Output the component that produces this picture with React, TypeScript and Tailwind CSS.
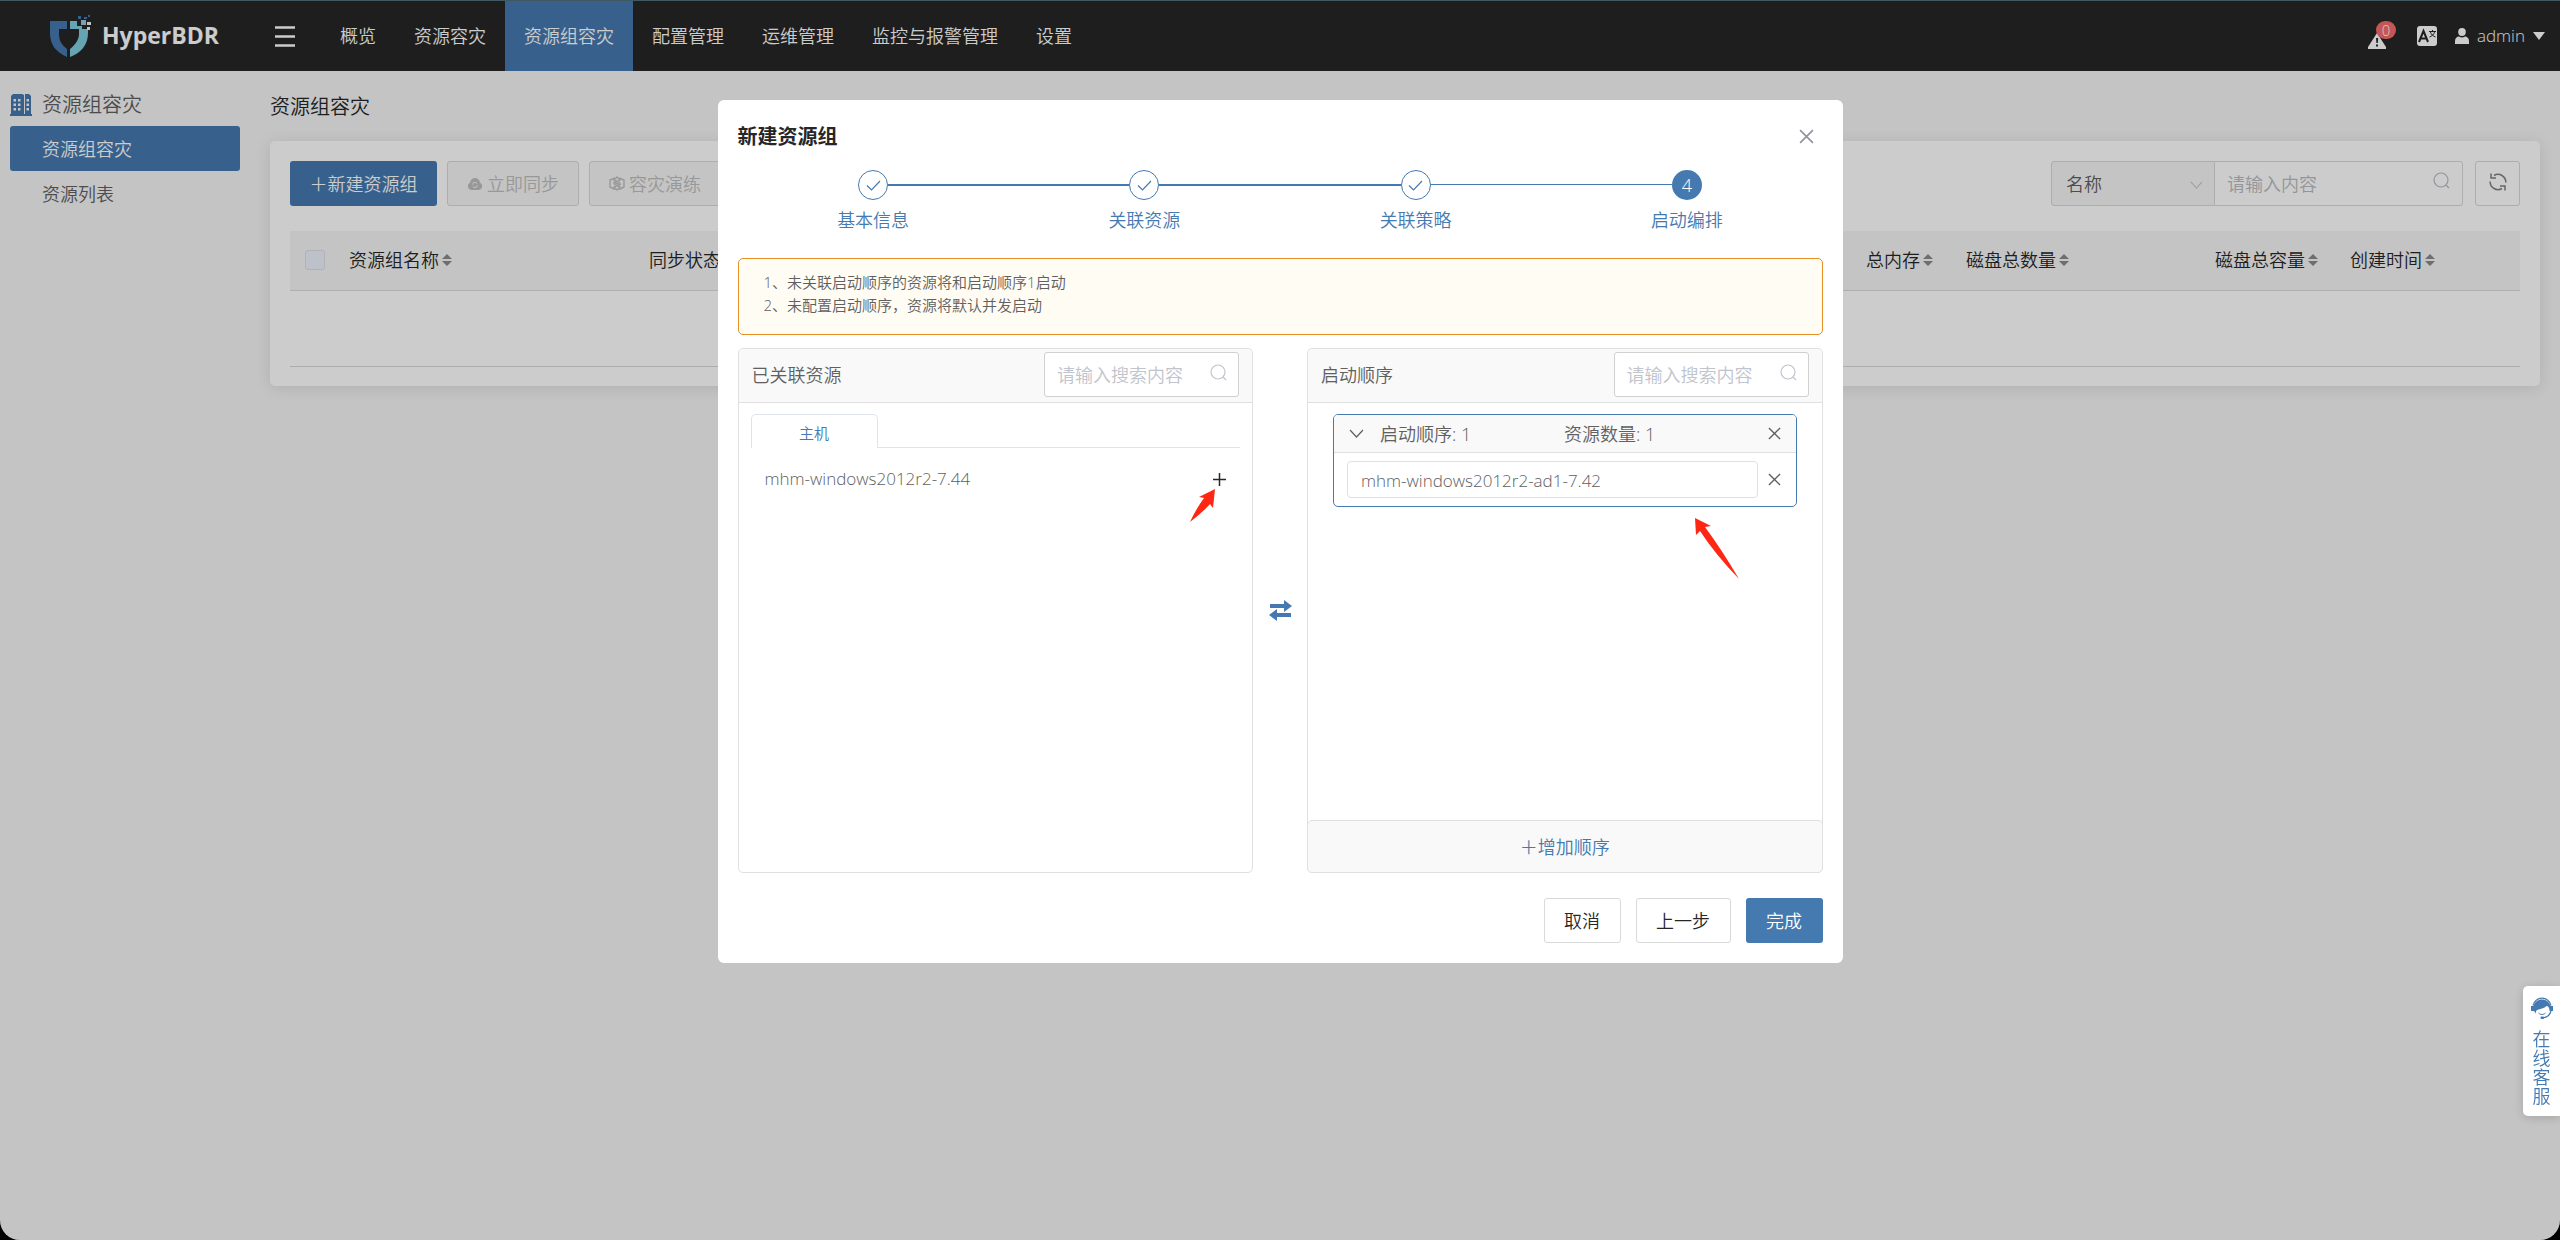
import type { ReactNode } from "react";

const NAV_ITEMS = ["概览", "资源容灾", "资源组容灾", "配置管理", "运维管理", "监控与报警管理", "设置"];
const ACTIVE_NAV = "资源组容灾";

const COLUMNS = [
	{ label: "资源组名称", width: "w-[300px]" },
	{ label: "同步状态", width: "" },
	{ label: "总内存", width: "w-[100px]" },
	{ label: "磁盘总数量", width: "w-[249px]" },
	{ label: "磁盘总容量", width: "w-[135px]" },
	{ label: "创建时间", width: "w-[182px]" },
];

const STEPS = ["基本信息", "关联资源", "关联策略", "启动编排"];
const CURRENT_STEP = 3;

export default function App() {
	return (
		<div className="min-h-screen bg-black font-['Open_Sans','Noto_Sans_CJK_SC',sans-serif] text-[18px] leading-6 font-[350] text-[#606060]">
			<div className="min-h-screen overflow-hidden rounded-b-[20px] bg-[#f5f5f5]">
				<Header />
				<div className="flex">
					<Sidebar />
					<ResourceGroups />
				</div>
			</div>
			<div className="fixed inset-0 flex items-start justify-center rounded-b-[20px] bg-black/20 pt-[100px]">
				<CreateDialog />
			</div>
			<OnlineService />
		</div>
	);
}

function Header() {
	return (
		<header className="flex h-[71px] items-center border-t border-[#51707a] bg-[#262626] text-white">
			<a href="#home" className="flex w-[275px] items-center pl-[49px]">
				<Logo />
				<span className="pl-2.5 pb-0.5 text-[23px] leading-8 font-bold">HyperBDR</span>
			</a>
			<button type="button" aria-label="菜单" className="mr-[26px]">
				<MenuIcon />
			</button>
			<nav className="flex self-stretch">
				{NAV_ITEMS.map((item) => (
					<a
						key={item}
						href="#nav"
						className={
							item === ACTIVE_NAV
								? "flex items-center bg-[#457ab0] px-[19px]"
								: "flex items-center px-[19px]"
						}
					>
						{item}
					</a>
				))}
			</nav>
			<div className="ml-auto flex items-center pr-[15px]">
				<button type="button" aria-label="报警" className="relative mr-[31px] pt-2.5">
					<WarningIcon />
					<span className="absolute -top-0.5 left-2 flex h-[18px] w-5 items-center justify-center rounded-full bg-[#f56c6c] text-[15px] leading-4">
						0
					</span>
				</button>
				<button type="button" aria-label="语言" className="mr-[18px]">
					<LanguageIcon />
				</button>
				<button type="button" className="flex items-center gap-2">
					<UserIcon />
					<span className="text-[17px]">admin</span>
					<svg width="12" height="8" viewBox="0 0 12 8" fill="currentColor">
						<path d="M0 0h12L6 8z" />
					</svg>
				</button>
			</div>
		</header>
	);
}

function Sidebar() {
	return (
		<aside className="flex w-[250px] shrink-0 flex-col px-2.5 pt-[13px]">
			<h2 className="flex h-[42px] items-center gap-2.5 text-[20px]">
				<BuildingIcon />
				资源组容灾
			</h2>
			<a href="#groups" className="flex h-[45px] items-center rounded-[3px] bg-[#457ab0] pl-8 text-white">
				资源组容灾
			</a>
			<a href="#resources" className="flex h-[45px] items-center pl-8">
				资源列表
			</a>
		</aside>
	);
}

function ResourceGroups() {
	return (
		<main className="min-w-0 flex-1 px-5">
			<h1 className="flex h-[70px] items-center pt-0.5 text-[20px] text-[#262626]">资源组容灾</h1>
			<section className="rounded-[5px] bg-white px-5 pt-5 pb-[19px] shadow-[0_2px_15px_rgba(0,0,0,0.1)]">
				<div className="flex h-[45px] items-stretch gap-2.5">
					<button type="button" className="w-[147px] rounded-[3px] bg-[#457ab0] text-white">
						＋新建资源组
					</button>
					<ToolButton icon={<CloudSyncIcon />}>立即同步</ToolButton>
					<ToolButton icon={<DrillIcon />}>容灾演练</ToolButton>
					<div className="mr-0.5 ml-auto flex">
						<div className="relative w-[164px]">
							<select
								aria-label="搜索字段"
								className="size-full appearance-none rounded-l-[3px] border border-[#d9d9d9] bg-[#f5f5f5] pl-3.5"
							>
								<option>名称</option>
							</select>
							<ChevronIcon className="absolute top-5 right-3 h-2 w-[13px] text-[#c0c4cc]" />
						</div>
						<div className="relative w-[248px]">
							<input
								aria-label="请输入内容"
								placeholder="请输入内容"
								className="size-full rounded-r-[3px] border border-l-0 border-[#d9d9d9] pl-3 placeholder:text-[#b8bbc2]"
							/>
							<SearchIcon className="absolute top-[11px] right-[13px] text-[#b8bbc2]" />
						</div>
					</div>
					<button
						type="button"
						aria-label="刷新"
						className="flex w-[45px] items-center justify-center rounded-[3px] border border-[#d9d9d9] pb-1"
					>
						<RefreshIcon />
					</button>
				</div>
				<table className="mt-[25px] w-full table-fixed">
					<thead>
						<tr className="h-[59px] border-b border-[#d9d9d9] bg-[#f5f5f5] text-left text-[#262626]">
							<th className="w-[47px] pl-[15px]">
								<input
									type="checkbox"
									aria-label="全选"
									disabled
									className="block size-5 appearance-none rounded-[3px] border border-[#dcdfe6] bg-[#edf2fc]"
								/>
							</th>
							{COLUMNS.map(({ label, width }) => (
								<th key={label} className={`pl-3 font-[350] ${width}`}>
									<span className="flex items-center gap-[3px] whitespace-nowrap">
										{label}
										<SortIcon />
									</span>
								</th>
							))}
						</tr>
					</thead>
					<tbody>
						<tr className="h-[76px] border-b border-[#d9d9d9]">
							<td colSpan={7} />
						</tr>
					</tbody>
				</table>
			</section>
		</main>
	);
}

function ToolButton({ icon, children }: { icon: ReactNode; children: ReactNode }) {
	return (
		<button
			type="button"
			disabled
			className="flex w-[132px] items-center justify-center gap-1 rounded-[3px] border border-[#d9d9d9] bg-[#f5f5f5] text-[#bfbfbf]"
		>
			{icon}
			{children}
		</button>
	);
}

function CreateDialog() {
	return (
		<div role="dialog" aria-label="新建资源组" className="w-[1125px] rounded-md bg-white px-5 pb-5">
			<div className="flex h-[70px] items-center justify-between pt-[3px]">
				<h2 className="text-[20px] font-bold text-[#262626]">新建资源组</h2>
				<button type="button" aria-label="关闭" className="mr-[9px] text-[#909399]">
					<CrossIcon className="size-[15px]" />
				</button>
			</div>
			<Steps />
			<div className="mt-[26px] h-[77px] rounded-[5px] border border-[#e88f25] bg-[#fffcf4] px-[25px] pt-3 text-[15px] leading-[23px]">
				<p>1、未关联启动顺序的资源将和启动顺序1启动</p>
				<p>2、未配置启动顺序，资源将默认并发启动</p>
			</div>
			<div className="mt-[13px] flex h-[525px] items-stretch">
				<Panel title="已关联资源">
					<div className="relative px-3 pt-[11px]">
						<div role="tablist" className="flex h-[34px] border-b border-[#dfe3ec]">
							<button
								type="button"
								role="tab"
								aria-selected
								className="-mb-px w-[127px] rounded-t-[5px] border border-b-0 border-[#dfe3ec] bg-white pt-0.5 text-[15px] text-[#457ab0]"
							>
								主机
							</button>
						</div>
						<div className="flex h-[62px] items-center justify-between px-3.5 text-[17px]">
							<span>mhm-windows2012r2-7.44</span>
							<button type="button" aria-label="添加" className="text-[#262626]">
								<svg width="13" height="13" viewBox="0 0 13 13" fill="none" stroke="currentColor" strokeWidth="1.5">
									<path d="M6.5 0v13M0 6.5h13" />
								</svg>
							</button>
						</div>
						<svg className="absolute top-[86px] right-9" width="26" height="33" viewBox="0 0 26 33" fill="#fe2713">
							<path d="M25 0 23 19 20 15Q12 24 0 33Q6 20 14 9L9 8Z" />
						</svg>
					</div>
				</Panel>
				<div className="flex w-[54px] items-center justify-center text-[#457ab0]">
					<SwapIcon />
				</div>
				<Panel title="启动顺序">
					<div className="relative px-[25px] pt-[11px]">
						<StartGroup />
						<svg className="absolute top-[115px] left-[387px]" width="45" height="62" viewBox="0 0 45 62" fill="#fe2713">
							<path d="M0 0 16 8 10 9Q27 32 44 61Q20 36 5 13L1 17Z" />
						</svg>
					</div>
					<button
						type="button"
						className="-mx-px mt-auto -mb-px h-[53px] rounded-[5px] border border-[#e0e0e0] bg-[#f9f9f9] text-[#457ab0]"
					>
						＋增加顺序
					</button>
				</Panel>
			</div>
			<div className="mt-[25px] flex justify-end gap-[15px] text-[#262626]">
				<button type="button" className="h-[45px] w-[77px] rounded-[3px] border border-[#d9d9d9]">
					取消
				</button>
				<button type="button" className="h-[45px] w-[95px] rounded-[3px] border border-[#d9d9d9]">
					上一步
				</button>
				<button type="button" className="h-[45px] w-[77px] rounded-[3px] bg-[#457ab0] text-white">
					完成
				</button>
			</div>
		</div>
	);
}

function Steps() {
	return (
		<ol className="flex text-[#457ab0]">
			{STEPS.map((step, i) => (
				<li key={step} className="flex flex-1 flex-col items-center">
					<div className="flex w-full items-center">
						<StepLine index={i - 1} />
						{i === CURRENT_STEP ? (
							<span className="flex size-[30px] items-center justify-center rounded-full bg-[#457ab0] text-white">
								{i + 1}
							</span>
						) : (
							<span className="flex size-[30px] items-center justify-center rounded-full border border-[#457ab0]">
								<svg width="15" height="11" viewBox="0 0 15 11" fill="none" stroke="currentColor" strokeWidth="1.2">
									<path d="M1 5.5 5.5 10 14 1" />
								</svg>
							</span>
						)}
						<StepLine index={i} />
					</div>
					<span className="pt-2">{step}</span>
				</li>
			))}
		</ol>
	);
}

// Half of the line that joins step `index` to the next one
function StepLine({ index }: { index: number }) {
	if (index < 0 || index >= CURRENT_STEP) return <span className="flex-1" />;
	return (
		<span
			className={
				index < CURRENT_STEP - 1
					? "h-0.5 flex-1 border-t-2 border-[#457ab0]"
					: "h-0.5 flex-1 border-t border-[#457ab0]"
			}
		/>
	);
}

function Panel({ title, children }: { title: string; children: ReactNode }) {
	return (
		<section className="flex flex-1 flex-col rounded-[5px] border border-[#e0e0e0]">
			<div className="flex h-[54px] items-start justify-between rounded-t-[5px] border-b border-[#e0e0e0] bg-[#f9f9f9] px-[13px] pt-[3px]">
				<h3 className="pt-[11px]">{title}</h3>
				<div className="relative h-[45px] w-[195px]">
					<input
						aria-label={`搜索${title}`}
						placeholder="请输入搜索内容"
						className="size-full rounded-[3px] border border-[#d0d0d0] bg-white pl-3 placeholder:text-[#c0c4cc]"
					/>
					<SearchIcon className="absolute top-3 right-3 text-[#c0c4cc]" />
				</div>
			</div>
			{children}
		</section>
	);
}

function StartGroup() {
	return (
		<div className="h-[93px] overflow-hidden rounded-[5px] border border-[#457ab0]">
			<div className="flex h-[38px] items-center border-b border-[#e0e0e0] bg-[#f9f9f9] px-[15px]">
				<ChevronIcon className="mr-4 h-[9px] w-[15px]" />
				<span className="w-[184px]">启动顺序: 1</span>
				<span>资源数量: 1</span>
				<button type="button" aria-label="删除顺序" className="ml-auto">
					<CrossIcon className="size-[13px]" />
				</button>
			</div>
			<div className="flex items-center pt-2 pr-[15px] pl-[13px]">
				<input
					aria-label="资源"
					readOnly
					value="mhm-windows2012r2-ad1-7.42"
					className="h-[37px] w-[411px] rounded-[4px] border border-[#e0e0e0] pt-0.5 pl-[13px] text-[17px]"
				/>
				<button type="button" aria-label="移除资源" className="ml-auto">
					<CrossIcon className="size-[13px]" />
				</button>
			</div>
		</div>
	);
}

function OnlineService() {
	return (
		<a
			href="#service"
			className="fixed right-0 bottom-[124px] flex w-[37px] flex-col items-center rounded-l-[5px] bg-white pt-[11px] pb-2.5 text-[#457ab0] shadow-[0_2px_10px_rgba(0,0,0,0.15)]"
		>
			<HeadsetIcon />
			<span className="w-[18px] pt-[11px] leading-[19px] break-all">在线客服</span>
		</a>
	);
}

function Logo() {
	return (
		<svg width="43" height="44" viewBox="0 0 43 44">
			<path fill="#457ab0" d="M1 7h17v8h-8v5c0 7 3 11 8 15v8C7 38 1 31 1 19z" />
			<path fill="#7fcde0" d="M21 7h7v5h5v3h6v4c0 12-7 20-18 24v-8c5-4 9-9 9-15v-5h-9z" />
			<path fill="#9fc3e0" d="M32 6h5v5h-5z" />
			<path fill="#f0f0f0" d="M38 8h4v3h-4zM38 13h3v3h-3z" />
			<path fill="#457ab0" d="M29 2h3v3h-3zM35 3h3v2h-3zM39 1h2v2h-2z" />
		</svg>
	);
}

function MenuIcon() {
	return (
		<svg width="20" height="21" viewBox="0 0 20 21" stroke="currentColor" strokeWidth="2.4">
			<path d="M0 1.5h20M0 10.5h20M0 19.5h20" />
		</svg>
	);
}

function WarningIcon() {
	return (
		<svg width="18" height="16" viewBox="0 0 18 16">
			<path fill="#fff" d="M9 0 18 14v2H0v-2z" />
			<path fill="#262626" d="M8 5h2.200l-.4 5H8.400zM8 11.500h2v2H8z" />
		</svg>
	);
}

function LanguageIcon() {
	return (
		<svg width="20" height="20" viewBox="0 0 20 20">
			<rect width="20" height="20" rx="3" fill="#fff" />
			<path fill="none" stroke="#262626" strokeWidth="2" d="M2 16 6.500 5 11 16M3.500 12.500h6" />
			<path fill="none" stroke="#262626" d="M12 5.500h7M15.500 4v1.500M13.500 6c.5 2.500 2.500 4 5 5M17.500 6c-.5 2.500-2.500 4-5 5" />
		</svg>
	);
}

function UserIcon() {
	return (
		<svg width="14" height="16" viewBox="0 0 14 16" fill="currentColor">
			<ellipse cx="7" cy="4" rx="3.800" ry="4" />
			<path d="M0 16v-3c0-3 2-4.500 4-4.500 2 1.200 4 1.200 6 0 2 0 4 1.500 4 4.500v3z" />
		</svg>
	);
}

function BuildingIcon() {
	return (
		<svg width="22" height="22" viewBox="0 0 22 22">
			<path fill="#457ab0" d="M1 2 3 0h9l2 1v19h1V0h4l2 2v18h1v2H0v-2h1z" />
			<path
				fill="#f5f5f5"
				d="M3.500 5h2.500v2.500H3.500zM8 5h2.500v2.500H8zM3.500 9.500h2.500V12H3.500zM8 9.500h2.500V12H8zM3.500 14h2.500v2.500H3.500zM8 14h2.500v2.500H8zM16.500 5H19v2.500h-2.500zM16.500 9.500H19V12h-2.500zM16.500 14H19v2.500h-2.500z"
			/>
		</svg>
	);
}

function CloudSyncIcon() {
	return (
		<svg width="16" height="12" viewBox="0 0 16 12">
			<path fill="#bfbfbf" d="M4 12a4 4 0 0 1-1-7.500C3.500 1.500 5.500 0 8 0s4.500 1.500 5 4.500A4 4 0 0 1 12 12z" />
			<path fill="none" stroke="#f5f5f5" d="M5.500 6.500a2.500 2.500 0 0 1 4.500-1M10.500 7.500a2.500 2.500 0 0 1-4.500 1" />
		</svg>
	);
}

function DrillIcon() {
	return (
		<svg width="16" height="15" viewBox="0 0 16 15" fill="none" stroke="#bfbfbf" strokeWidth="1.400">
			<path d="M6 2 1 4v7l5 2.500M10 2l5 2v7l-5 2.500" />
			<path d="M5 4l3-3 3 3-3 1.500zM5 11l3 3 3-3-3-1.500zM4 7l4-1.500M12 8 8 9.500M5 8.500l6-2" />
		</svg>
	);
}

function RefreshIcon() {
	return (
		<svg width="18" height="18" viewBox="0 0 18 18" fill="none" stroke="#808080" strokeWidth="1.500">
			<path d="M5 2.500A7.800 7.800 0 0 1 16.800 9.500M13 15.500A7.800 7.800 0 0 1 1.200 8.500" />
			<path d="M2 .5V5h5M16 17.500V13h-5" />
		</svg>
	);
}

function SwapIcon() {
	return (
		<svg width="23" height="21" viewBox="0 0 23 21" fill="currentColor">
			<path d="M1 4h14V0l8 6-8 6V8H1z" />
			<path d="M22 17H8v4l-8-6 8-6v4h14z" />
		</svg>
	);
}

function SortIcon() {
	return (
		<svg width="10" height="12" viewBox="0 0 10 12" fill="#8a8a8a">
			<path d="M5 0l5 5H0zM5 12 0 7h10z" />
		</svg>
	);
}

function SearchIcon({ className }: { className: string }) {
	return (
		<svg className={className} width="17" height="17" viewBox="0 0 17 17" fill="none" stroke="currentColor" strokeWidth="1.200">
			<circle cx="8" cy="8" r="7" />
			<path d="m13 13 3 3" />
		</svg>
	);
}

function ChevronIcon({ className }: { className: string }) {
	return (
		<svg className={className} viewBox="0 0 15 9" fill="none" stroke="currentColor" strokeWidth="1.200">
			<path d="m1 1 6.500 7L14 1" />
		</svg>
	);
}

function CrossIcon({ className }: { className: string }) {
	return (
		<svg className={className} viewBox="0 0 14 14" fill="none" stroke="currentColor" strokeWidth="1.500">
			<path d="m1 1 12 12M13 1 1 13" />
		</svg>
	);
}

function HeadsetIcon() {
	return (
		<svg width="22" height="22" viewBox="0 0 22 22">
			<path fill="none" stroke="#457ab0" strokeWidth="1.200" d="M2 8.500a9.200 9.200 0 0 1 18 0M20 14c-1 4-4 6.500-8 6.800" />
			<path fill="#457ab0" d="M0 9h2.500C3.500 5 7 2.500 11 2.500S18.500 5 19.500 9H22v5h-3.500c0-2-.5-3.500-1.500-4.500-.5-.5-1-.8-1.500-.5-2.500 2.500-5 2.500-8 3.500-2 .7-2.500 1-2.500 2.500v1.500L3 14H0z" />
			<path fill="none" stroke="#457ab0" d="M7.500 16c2 2 5 2 7 0" />
			<rect x="9.500" y="19.500" width="3.500" height="2.500" rx="1" fill="#457ab0" />
		</svg>
	);
}
